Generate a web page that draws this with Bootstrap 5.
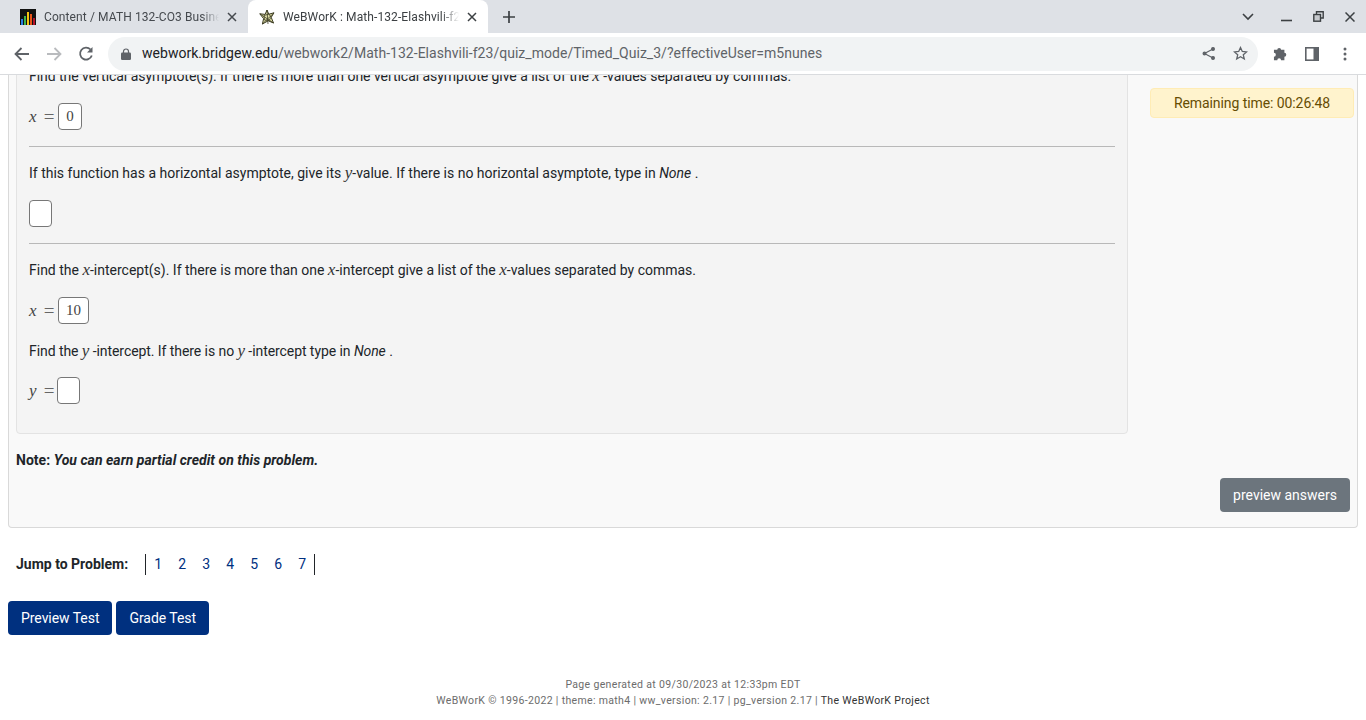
<!DOCTYPE html>
<html lang="en"><head><meta charset="utf-8"><title>WeBWorK</title>
<link href="https://cdn.jsdelivr.net/npm/bootstrap@5.3.0/dist/css/bootstrap.min.css" rel="stylesheet">
<style>
html,body{height:720px;overflow:hidden;background:#fff}
body{font-family:Roboto,"Liberation Sans",sans-serif;font-size:14px;color:#212529}
.tabstrip{height:33px;background:#dee1e6;padding-left:8px}
.tabx{width:240px;height:33px;font-size:12px;color:#45494e;padding:0 11px 0 12px;letter-spacing:.1px}
.tabx.on{background:#fff;border-radius:8px 8px 0 0;color:#3c4043;padding-left:11px}
.tabname{flex:1;overflow:hidden;white-space:nowrap;margin-left:8px;-webkit-mask-image:linear-gradient(90deg,#000 90%,transparent);mask-image:linear-gradient(90deg,#000 90%,transparent)}
.toolbar{height:42px;background:#fff;border-bottom:1px solid #d9dbde;padding:0 0 0 14px}
.omni{width:1150px;height:34px;background:#f1f3f4;border-radius:17px;margin:0 15px 0 14px;font-size:14px;color:#5f6368;padding:0 10px 0 13px}
.omni b{font-weight:400;color:#202124}
.urltext{margin-left:11px;letter-spacing:.03px}
.viewport{height:644px;overflow:hidden}
.scrollbox{margin-top:-11px;padding:0 8px}
.probcard{height:464px;background:#f9f9f9;border:1px solid #d9d9d9;border-top:0;border-radius:0 0 4px 4px;padding:0 7px}
.probwell{width:1112px;height:370px;background:#f4f4f4;border:1px solid #e3e3e3;border-radius:0 0 4px 4px;padding:0 12px}
.ln{height:21px;line-height:21px;white-space:nowrap}
.ln.first{letter-spacing:-.045px}
.ln.tight-ln{letter-spacing:-.07px}
.mth{font-family:"Liberation Serif",serif;font-style:italic;font-size:17px;color:#333}
.eqn{font-family:"Liberation Serif",serif;color:#555;font-size:18px;height:28px}
.eqn .mth{width:9px;color:#444;line-height:1}
.eqsign{margin:0 3px 0 5px;width:12px;line-height:1;text-align:center;font-size:19px;color:#666}
.ansbox{display:inline-block;height:27px;min-width:24px;background:#fff;border:1px solid #777;border-radius:4px;text-align:center;line-height:25px;padding:0 7px;color:#444;font-size:15px;font-family:"Liberation Serif",serif;font-style:normal}
.ansbox.tight{padding:0;min-width:23px}
.rule{border-top:1px solid #b8b8b8;margin:0;opacity:1}
.timer{width:204px;height:30px;margin:24px 0 0 22px;background:#fff3cd;border:1px solid #ffecb5;border-radius:4px;color:#664d03;line-height:28px;text-align:center;letter-spacing:-.08px}
.note{margin-top:16px;height:21px;line-height:21px;letter-spacing:.03px}
.btn-prev{background:#6c757d;color:#fff;font-size:14px;padding:0 13px;height:34px;line-height:34px;border:0;border-radius:4px}
.jump{height:22px;margin:25px 0 0 8px}
.jumpnums{border-left:1px solid #212529;border-right:1px solid #212529;height:21px;margin-left:17px}
.jumpnums a{color:#00307f;text-decoration:none;width:24px;text-align:center;line-height:21px;display:block}
.bluebtn{background:#00307f;color:#fff;font-size:14px;height:34px;line-height:34px;padding:0 13px;border:0;border-radius:4px;letter-spacing:-.05px}
.foot{margin-top:42px;font-size:10.5px;color:#6c6c6c;line-height:16px;text-align:center;letter-spacing:.34px}
.foot a{color:#333;text-decoration:none}
</style></head><body>
<div class="tabstrip d-flex align-items-center">
 <div class="tabx d-flex align-items-center">
  <svg class="flex-shrink-0" width="16" height="16" viewBox="0 0 16 16"><rect width="16" height="16" fill="#111"/><rect x="1" y="10" width="2" height="6" fill="#2a7de1"/><rect x="4" y="7" width="2" height="9" fill="#3cb44b"/><rect x="7" y="3" width="2" height="13" fill="#f6c40f"/><rect x="10" y="5" width="2" height="11" fill="#e8541a"/><rect x="13" y="9" width="2" height="7" fill="#b3122a"/></svg>
  <span class="tabname">Content / MATH 132-CO3 Business</span>
  <svg class="ms-2 flex-shrink-0" width="10" height="10" viewBox="0 0 10 10"><path d="M1 1l8 8M9 1l-8 8" stroke="#45494e" stroke-width="1.5"/></svg>
 </div>
 <div class="tabx on d-flex align-items-center">
  <svg class="flex-shrink-0" width="16" height="16" viewBox="0 0 16 16" fill="none" stroke="#3d3d24" stroke-width="1"><path d="M8 1l1.800 4.200 5.200-1.400-2.800 4.500L14.500 14l-5.300-2.200L3.400 15l1.200-5.300L.8 4.800l5.300.6z" fill="#dedda6"/><path d="M8 1l1 14M.8 4.800L14.500 14M15 3.800L3.400 15M5 6.500l5-1.500 2 3.300-2 3.200-4.500-.5z" stroke-width=".8"/></svg>
  <span class="tabname">WeBWorK : Math-132-Elashvili-f23</span>
  <svg class="ms-2 flex-shrink-0" width="10" height="10" viewBox="0 0 10 10"><path d="M1 1l8 8M9 1l-8 8" stroke="#3c4043" stroke-width="1.5"/></svg>
 </div>
 <svg style="margin-left:15px" width="12" height="12" viewBox="0 0 12 12"><path d="M6 0v12M0 6h12" stroke="#3c4043" stroke-width="1.7"/></svg>
 <div class="ms-auto d-flex align-items-center">
  <svg width="12" height="8" viewBox="0 0 12 8" fill="none"><path d="M1 1l5 5 5-5" stroke="#3c4043" stroke-width="1.6"/></svg>
  <svg style="margin-left:27px" width="11" height="11" viewBox="0 0 11 11"><path d="M0 9.500h11" stroke="#3c4043" stroke-width="1.6"/></svg>
  <svg style="margin-left:21px" width="11" height="11" viewBox="0 0 11 11" fill="none" stroke="#3c4043" stroke-width="1.400"><path d="M3.500 3V.8h6.700V7H8"/><rect x=".8" y="3.500" width="6.700" height="6.700" fill="#3c4043" fill-opacity=".15"/></svg>
  <svg style="margin:0 11px 0 21px" width="10" height="10" viewBox="0 0 10 10"><path d="M.5.5l9 9M9.500.5l-9 9" stroke="#3c4043" stroke-width="1.500"/></svg>
 </div>
</div>
<div class="toolbar d-flex align-items-center">
 <svg width="16" height="14" viewBox="0 0 16 14" fill="none" stroke="#5f6368" stroke-width="1.800"><path d="M15 7H2M7.500 1L1.500 7l6 6"/></svg>
 <svg style="margin-left:16px" width="16" height="14" viewBox="0 0 16 14" fill="none" stroke="#b9bbbe" stroke-width="1.800"><path d="M1 7h13M8.500 1l6 6-6 6"/></svg>
 <svg style="margin-left:16px" width="16" height="16" viewBox="0 0 16 16" fill="none" stroke="#5f6368" stroke-width="1.800"><path d="M13.800 9.500A6 6 0 1 1 12.500 3.500"/><path d="M14.500 1v5.500H9" fill="#5f6368" stroke="none"/></svg>
 <div class="omni d-flex align-items-center">
  <svg class="flex-shrink-0" width="10" height="12" viewBox="0 0 10 12"><path d="M2.500 5V3.500a2.500 2.500 0 0 1 5 0V5" fill="none" stroke="#5f6368" stroke-width="1.200"/><rect y="4.500" width="10" height="7.500" rx="1.200" fill="#5f6368"/></svg>
  <span class="urltext"><b>webwork.bridgew.edu</b>/webwork2/Math-132-Elashvili-f23/quiz_mode/Timed_Quiz_3/?effectiveUser=m5nunes</span>
  <svg class="ms-auto" width="13" height="13" viewBox="0 0 13 13" fill="none" stroke="#5f6368" stroke-width="1.200"><path d="M11 2L2.500 6.500 11 11"/><circle cx="11" cy="2" r="1.400" fill="#5f6368"/><circle cx="2.500" cy="6.500" r="1.400" fill="#5f6368"/><circle cx="11" cy="11" r="1.400" fill="#5f6368"/></svg>
  <svg style="margin-left:18px" width="15" height="15" viewBox="0 0 15 15" fill="none" stroke="#5f6368" stroke-width="1.300"><path d="M7.500 1.500l1.800 4 4.300.4-3.300 2.900 1 4.200-3.800-2.200-3.800 2.200 1-4.200L1.400 5.900l4.300-.4z"/></svg>
 </div>
 <svg width="15" height="15" viewBox="0 0 15 15" fill="#5f6368"><path d="M1 4h3.500a2 2 0 1 1 4 0H12v3.200a2 2 0 1 1 0 4V15H8.500a2 2 0 1 0-4 0H1v-3.800a2 2 0 1 0 0-4z" transform="scale(.95)"/></svg>
 <svg style="margin-left:17px" width="14" height="14" viewBox="0 0 14 14"><rect x=".8" y=".8" width="12.400" height="12.400" fill="none" stroke="#5f6368" stroke-width="1.600"/><rect x="8.500" y="1" width="5" height="12" fill="#5f6368"/></svg>
 <svg style="margin-left:24px" width="4" height="14" viewBox="0 0 4 14" fill="#5f6368"><circle cx="2" cy="2" r="1.500"/><circle cx="2" cy="7" r="1.500"/><circle cx="2" cy="12" r="1.500"/></svg>
</div>
<div class="viewport"><div class="scrollbox">
 <div class="probcard">
  <div class="d-flex align-items-start">
   <div class="probwell flex-shrink-0">
    <div class="ln first">Find the vertical asymptote(s). If there is more than one vertical asymptote give a list of the <span class="mth">x</span> -values separated by commas.</div>
    <div class="eqn d-flex align-items-center" style="margin-top:16px"><span class="mth">x</span><span class="eqsign">=</span><span class="ansbox">0</span></div>
    <hr class="rule" style="margin-top:16px">
    <div class="ln" style="margin-top:15px">If this function has a horizontal asymptote, give its <span class="mth">y</span>-value. If there is no horizontal asymptote, type in <i>None</i> .</div>
    <div style="margin-top:17px;height:27px"><span class="ansbox tight"></span></div>
    <hr class="rule" style="margin-top:16px">
    <div class="ln" style="margin-top:15px">Find the <span class="mth">x</span>-intercept(s). If there is more than one <span class="mth">x</span>-intercept give a list of the <span class="mth">x</span>-values separated by commas.</div>
    <div class="eqn d-flex align-items-center" style="margin-top:16px"><span class="mth">x</span><span class="eqsign">=</span><span class="ansbox">10</span></div>
    <div class="ln tight-ln" style="margin-top:16px">Find the <span class="mth">y</span> -intercept. If there is no <span class="mth">y</span> -intercept type in <i>None</i> .</div>
    <div class="eqn d-flex align-items-center" style="margin-top:15px"><span class="mth">y</span><span class="eqsign" style="margin-right:2px">=</span><span class="ansbox tight"></span></div>
   </div>
   <div class="timer flex-shrink-0">Remaining time: 00:26:48</div>
  </div>
  <div class="note"><b>Note: <i>You can earn partial credit on this problem.</i></b></div>
  <div class="d-flex justify-content-end" style="margin-top:7px"><button class="btn-prev" type="button">preview answers</button></div>
 </div>
 <div class="jump d-flex align-items-center"><b>Jump to Problem:</b>
  <div class="jumpnums d-flex"><a href="#">1</a><a href="#">2</a><a href="#">3</a><a href="#">4</a><a href="#">5</a><a href="#">6</a><a href="#">7</a></div>
 </div>
 <div class="d-flex gap-1" style="margin-top:26px"><button class="bluebtn" type="button">Preview Test</button><button class="bluebtn" type="button">Grade Test</button></div>
 <div class="foot">Page generated at 09/30/2023 at 12:33pm EDT<br>WeBWorK © 1996-2022 | theme: math4 | ww_version: 2.17 | pg_version 2.17 | <a href="#">The WeBWorK Project</a></div>
</div></div>
<script src="https://cdn.jsdelivr.net/npm/bootstrap@5.3.0/dist/js/bootstrap.bundle.min.js"></script>
</body></html>
